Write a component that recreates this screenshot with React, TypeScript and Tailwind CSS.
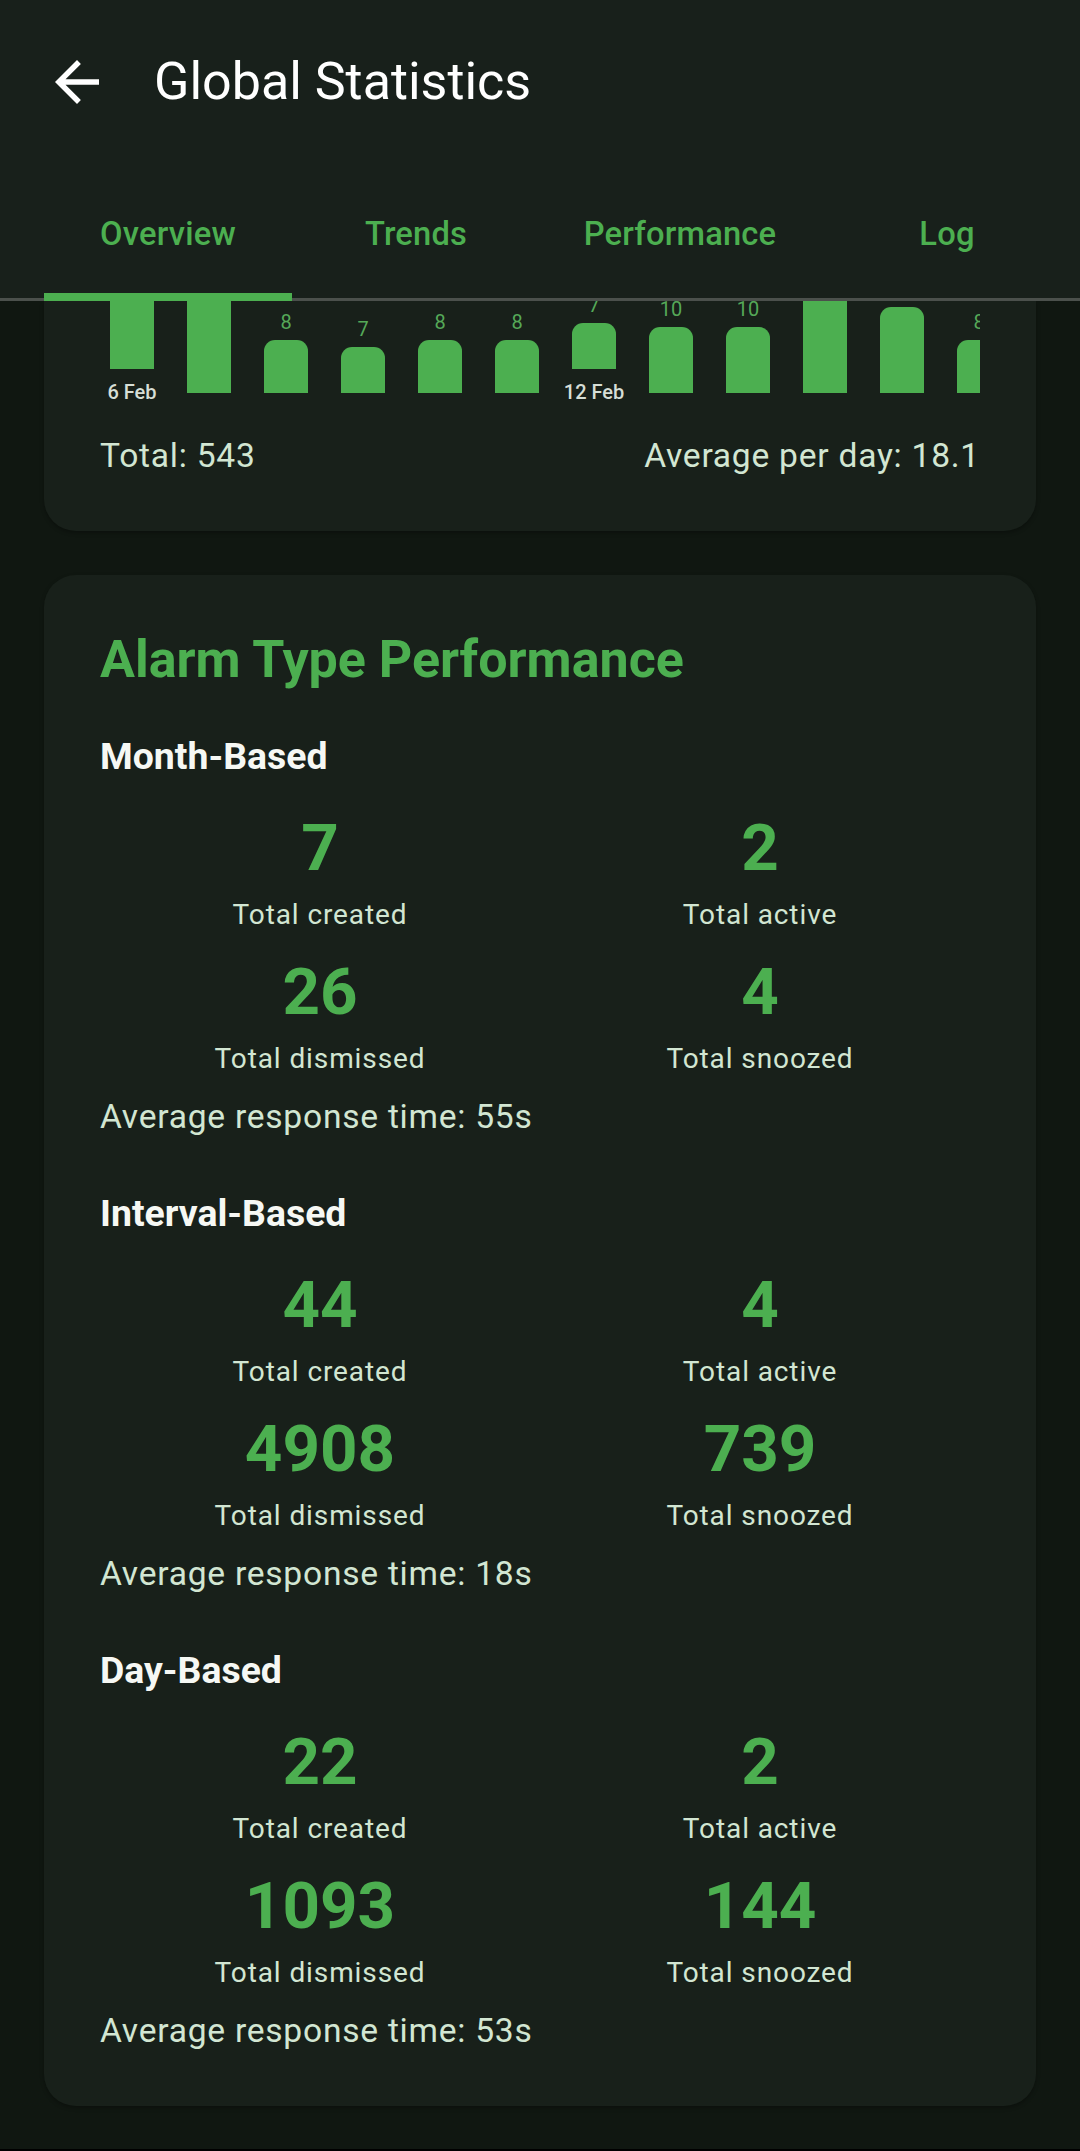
import React from 'react';

type Bar = { v: number; d?: string };

const bars: Bar[] = [
  { v: 20, d: '6 Feb' },
  { v: 24 },
  { v: 8 },
  { v: 7 },
  { v: 8 },
  { v: 8 },
  { v: 7, d: '12 Feb' },
  { v: 10 },
  { v: 10 },
  { v: 22 },
  { v: 13 },
  { v: 8 },
  { v: 9 },
  { v: 12, d: '18 Feb' },
  { v: 11 },
  { v: 9 },
];

const tabs = [
  { label: 'Overview', cls: 'w-[248px]' },
  { label: 'Trends', cls: 'w-[248px]' },
  { label: 'Performance', cls: 'w-[280px]' },
  { label: 'Log', cls: 'w-[254px]' },
];

type SectionData = {
  title: string;
  created: string;
  active: string;
  dismissed: string;
  snoozed: string;
  avg: string;
};

const sections: SectionData[] = [
  { title: 'Month-Based', created: '7', active: '2', dismissed: '26', snoozed: '4', avg: '55s' },
  { title: 'Interval-Based', created: '44', active: '4', dismissed: '4908', snoozed: '739', avg: '18s' },
  { title: 'Day-Based', created: '22', active: '2', dismissed: '1093', snoozed: '144', avg: '53s' },
];

function BackArrow() {
  return (
    <svg width="66" height="66" viewBox="0 0 24 24" fill="#ffffff" className="shrink-0">
      <path d="M20 11H7.83l5.59-5.59L12 4l-8 8 8 8 1.41-1.41L7.83 13H20v-2z" />
    </svg>
  );
}

function Stat({ value, label }: { value: string; label: string }) {
  return (
    <div className="flex flex-col items-center">
      <div className="text-[65.5px] leading-[72px] font-bold text-[#4caf50]">{value}</div>
      <div className="mt-[13px] text-[28px] leading-[36px] tracking-[0.9px] text-[#d2e6d2]">{label}</div>
    </div>
  );
}

function Section({ s, first }: { s: SectionData; first: boolean }) {
  return (
    <div className={first ? 'mt-[44px]' : 'mt-[50px]'}>
      <div className="text-[37.4px] leading-[48px] font-bold text-[#f6f8f4]">{s.title}</div>
      <div className="mt-[32px] grid grid-cols-2 gap-y-[23px]">
        <Stat value={s.created} label="Total created" />
        <Stat value={s.active} label="Total active" />
        <Stat value={s.dismissed} label="Total dismissed" />
        <Stat value={s.snoozed} label="Total snoozed" />
      </div>
      <div className="mt-[18px] text-[33.6px] leading-[44px] tracking-[0.75px] text-[#d2e6d2]">
        Average response time: {s.avg}
      </div>
    </div>
  );
}

export default function App() {
  return (
    <div className="h-[2151px] w-full overflow-hidden bg-[#101711] flex flex-col font-['Roboto',sans-serif]">
      {/* Header */}
      <div className="bg-[#18201b] shrink-0">
        <div className="h-[169px] flex items-center pl-[44px] pb-[6px]">
          <BackArrow />
          <div className="ml-[44px] text-[52px] leading-[64px] text-white">Global Statistics</div>
        </div>
        <div className="relative h-[132px] flex pl-[44px] overflow-hidden">
          {tabs.map((t) => (
            <div
              key={t.label}
              className={`${t.cls} shrink-0 flex items-center justify-center text-[32.7px] font-medium tracking-[0.2px] text-[#4caf50]`}
            >
              {t.label}
            </div>
          ))}
          <div className="absolute left-0 right-0 bottom-0 h-[3px] bg-[#4b504c]" />
          <div className="absolute left-[44px] bottom-0 h-[8px] w-[248px] bg-[#4caf50]" />
        </div>
      </div>

      {/* Content */}
      <div className="flex-1 overflow-hidden">
        {/* Chart card (scrolled, top hidden under the header) */}
        <div className="mx-[44px] rounded-b-[32px] bg-[#18201a] px-[56px] pb-[53px] shadow-[0_2px_4px_rgba(0,0,0,0.3)]">
          <div className="h-[103px] overflow-hidden flex items-end pl-[10px] gap-[33px]">
            {bars.map((b, i) => (
              <div key={i} className="w-[44px] shrink-0 flex flex-col items-center">
                <div className="mb-[6px] text-[20px] leading-[24px] text-[#55a858]">{b.v}</div>
                <div className="w-[44px] rounded-t-[11px] bg-[#4caf50]" style={{ height: `${b.v * 6.6}px` }} />
                {b.d ? (
                  <div className="mt-[11px] h-[24px] whitespace-nowrap text-[20px] leading-[24px] font-medium text-[#d6ded6]">
                    {b.d}
                  </div>
                ) : (
                  <div className="h-[11px]" />
                )}
              </div>
            ))}
          </div>
          <div className="mt-[30px] flex justify-between text-[33.6px] leading-[44px] tracking-[0.75px] text-[#d2e6d2]">
            <span>Total: 543</span>
            <span>Average per day: 18.1</span>
          </div>
        </div>

        {/* Alarm type performance card */}
        <div className="mx-[44px] mt-[44px] rounded-[32px] bg-[#18201a] px-[56px] pt-[57px] pb-[53px] shadow-[0_2px_4px_rgba(0,0,0,0.3)]">
          <div className="text-[52px] leading-[56px] font-bold text-[#4caf50]">Alarm Type Performance</div>
          {sections.map((s, i) => (
            <Section key={s.title} s={s} first={i === 0} />
          ))}
        </div>
      </div>
      <div className="h-[2px] bg-black shrink-0" />
    </div>
  );
}
